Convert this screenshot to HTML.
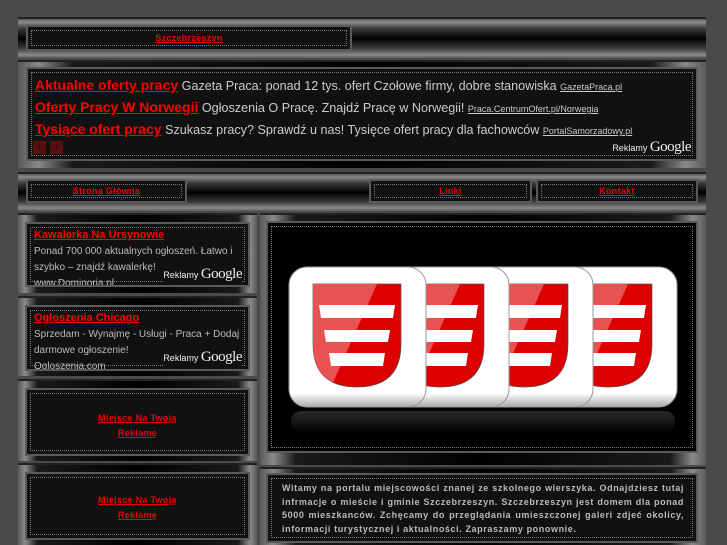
<!DOCTYPE html>
<html><head><meta charset="utf-8"><style>
*{margin:0;padding:0;box-sizing:border-box}
body{width:727px;height:545px;background:#4a4a4a;position:relative;overflow:hidden;font-family:"Liberation Sans",sans-serif}
.band{position:absolute;background:linear-gradient(to bottom,#5a5a5a 0%,#8a8a8a 8%,#3a3a3a 25%,#000 50%,#3a3a3a 75%,#8a8a8a 92%,#5a5a5a 100%);border-top:2px solid #222}
.vband{background:linear-gradient(to right,#5a5a5a 0%,#8a8a8a 3%,#1a1a1a 8%,#000 50%,#1a1a1a 92%,#8a8a8a 97%,#5a5a5a 100%)}
.box{position:absolute;background:#111;border:2px solid #5a5a5a}
.box .in{position:absolute;inset:3px;border:1px dotted #777}
a{color:#e00;font-weight:bold;text-decoration:underline}
.sm{font-size:9px;letter-spacing:.3px;position:absolute;left:0;right:0;text-align:center}
.ad{position:absolute;left:7px;font-size:12.6px;color:#ccc;white-space:nowrap}
.ad a{font-size:14px;color:#f00}
.ad .u{font-size:9px;color:#ccc;text-decoration:underline;font-weight:normal}
.gg{position:absolute;color:#eee;font-size:9px}
.gg b{font-family:"Liberation Serif",serif;font-size:15px;font-weight:normal;letter-spacing:-.5px}
.la{position:absolute;left:7px;right:6px;font-size:10px;color:#bbb;line-height:16px}
.la a{font-size:11px;color:#f00}
</style></head><body>

<div class="band" style="left:18px;top:17px;width:688px;height:41px"></div>
<div class="box" style="left:26px;top:25px;width:326px;height:26px"><div class="in"></div><a class="sm" href="#" style="top:6px">Szczebrzeszyn</a></div>

<div class="band vband" style="left:18px;top:60px;width:688px;height:108px"></div>
<div class="box" style="left:26px;top:67px;width:672px;height:94px"><div class="in"></div>
<div class="ad" style="top:8px"><a href="#">Aktualne oferty pracy</a> Gazeta Praca: ponad 12 tys. ofert Czołowe firmy, dobre stanowiska <span class="u">GazetaPraca.pl</span></div>
<div class="ad" style="top:30px"><a href="#">Oferty Pracy W Norwegii</a> Ogłoszenia O Pracę. Znajdź Pracę w Norwegii! <span class="u">Praca.CentrumOfert.pl/Norwegia</span></div>
<div class="ad" style="top:52px"><a href="#">Tysiące ofert pracy</a> Szukasz pracy? Sprawdź u nas! Tysięce ofert pracy dla fachowców <span class="u">PortalSamorzadowy.pl</span></div>
<div style="position:absolute;left:5px;top:72px;width:13px;height:13px;background:#5a0f0f;color:#111;font-size:11px;line-height:13px;text-align:center;font-weight:bold">‹</div>
<div style="position:absolute;left:22px;top:72px;width:13px;height:13px;background:#5a0f0f;color:#111;font-size:11px;line-height:13px;text-align:center;font-weight:bold">›</div>
<div class="gg" style="right:5px;top:70px">Reklamy <b>Google</b></div>
</div>

<div class="band" style="left:18px;top:172px;width:688px;height:39px"></div>
<div class="box" style="left:26px;top:179px;width:161px;height:24px"><div class="in"></div><a class="sm" href="#" style="top:5px">Strona Główna</a></div>
<div class="box" style="left:369px;top:179px;width:163px;height:24px"><div class="in"></div><a class="sm" href="#" style="top:5px">Linki</a></div>
<div class="box" style="left:536px;top:179px;width:162px;height:24px"><div class="in"></div><a class="sm" href="#" style="top:5px">Kontakt</a></div>

<div class="band vband" style="left:18px;top:213px;width:239px;height:80px"></div>
<div class="box" style="left:25px;top:222px;width:225px;height:65px;overflow:hidden"><div class="in"></div>
<div class="la" style="top:3px"><a href="#">Kawalerka Na Ursynowie</a><br>Ponad 700 000 aktualnych ogłoszeń. Łatwo i szybko – znajdź kawalerkę!<br>www.Dominoria.pl</div>
<div class="gg" style="right:6px;top:42px;background:#111">Reklamy <b>Google</b></div></div>

<div class="band vband" style="left:18px;top:296px;width:239px;height:80px"></div>
<div class="box" style="left:25px;top:305px;width:225px;height:66px;overflow:hidden"><div class="in"></div>
<div class="la" style="top:3px"><a href="#">Ogłoszenia Chicago</a><br>Sprzedam - Wynajmę - Usługi - Praca + Dodaj darmowe ogłoszenie!<br>Ogloszenia.com</div>
<div class="gg" style="right:6px;top:42px;background:#111">Reklamy <b>Google</b></div></div>

<div class="band vband" style="left:18px;top:379px;width:239px;height:82px"></div>
<div class="box" style="left:25px;top:388px;width:225px;height:68px"><div class="in"></div><a class="sm" href="#" style="top:21px;line-height:15px">Miejsce Na Twoją<br>Reklamę</a></div>

<div class="band vband" style="left:18px;top:463px;width:239px;height:82px"></div>
<div class="box" style="left:25px;top:472px;width:225px;height:68px"><div class="in"></div><a class="sm" href="#" style="top:19px;line-height:15px">Miejsce Na Twoją<br>Reklamę</a></div>

<div class="band vband" style="left:260px;top:213px;width:446px;height:252px"></div>
<div class="box" style="left:266px;top:221px;width:432px;height:232px;background:#000"><div class="in"></div></div>
<svg style="position:absolute;left:0;top:0" width="727" height="545">
<defs>
<linearGradient id="cg" x1="0" y1="0" x2="0" y2="1"><stop offset="0" stop-color="#fff"/><stop offset=".9" stop-color="#fff"/><stop offset="1" stop-color="#aaa"/></linearGradient>
<linearGradient id="rg" x1="0" y1="0" x2="0" y2="1"><stop offset="0" stop-color="#2a2a2a"/><stop offset="1" stop-color="#000"/></linearGradient>
<clipPath id="sc"><path d="M0,0H88V60Q88,103 44,103Q0,103 0,60Z"/></clipPath>
<g id="card">
<rect x="0" y="0" width="137" height="140" rx="18" fill="url(#cg)" stroke="#999" stroke-width="1"/>
<g transform="translate(24,17)">
<path d="M0,0H88V60Q88,103 44,103Q0,103 0,60Z" fill="#dd0000" stroke="#555" stroke-width=".7"/>
<g clip-path="url(#sc)"><path d="M0,0H64L18,103H0Z" fill="#e85252"/></g>
<path d="M6,21H82L80,34H8Z" fill="#fff"/>
<path d="M11,46H77L75,58H13Z" fill="#fff"/>
<path d="M16,69H72L70,82H18Z" fill="#fff"/>
</g>
</g>
<g id="refl"><rect x="2" y="144" width="133" height="22" rx="10" fill="url(#rg)"/></g>
</defs>
<use href="#refl" x="540" y="267"/>
<use href="#refl" x="456" y="267"/>
<use href="#refl" x="372" y="267"/>
<use href="#refl" x="289" y="267"/>
<use href="#card" x="540" y="267"/>
<use href="#card" x="456" y="267"/>
<use href="#card" x="372" y="267"/>
<use href="#card" x="289" y="267"/>
</svg>

<div class="band vband" style="left:260px;top:467px;width:446px;height:78px"></div>
<div class="box" style="left:266px;top:473px;width:432px;height:70px"><div class="in"></div>
<div style="position:absolute;left:14px;right:12px;top:7px;font-size:9px;line-height:13.5px;color:#bbb;font-weight:bold;text-align:justify;letter-spacing:.6px">Witamy na portalu miejscowości znanej ze szkolnego wierszyka. Odnajdziesz tutaj infrmacje o mieście i gminie Szczebrzeszyn. Szczebrzeszyn jest domem dla ponad 5000 mieszkanców. Zchęcamy do przeglądania umieszczonej galeri zdjeć okolicy, informacji turystycznej i aktualności. Zapraszamy ponownie.</div></div>

</body></html>
